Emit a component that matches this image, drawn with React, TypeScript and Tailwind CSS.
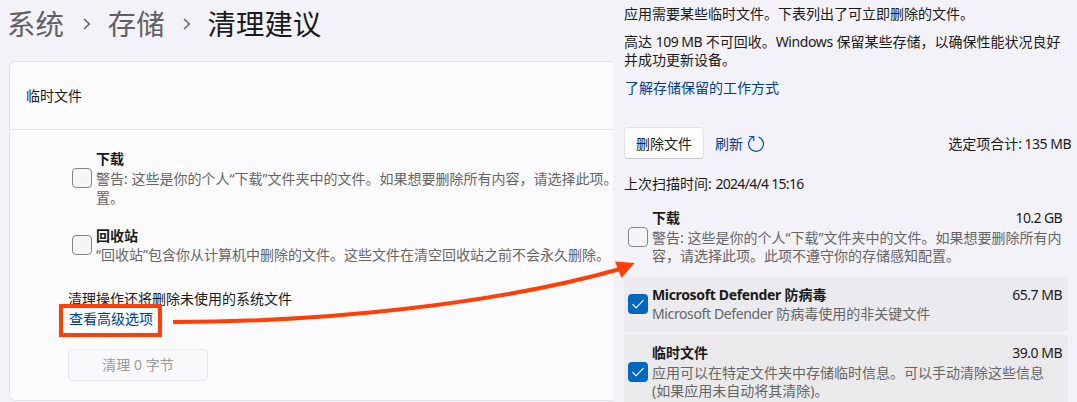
import type { ReactNode } from "react";

function Line({ children, className = "" }: { children: ReactNode; className?: string }) {
  return <div className={`h-[19px] whitespace-nowrap text-sm leading-[19px] ${className}`}>{children}</div>;
}

function Check({ checked = false }: { checked?: boolean }) {
  if (checked) {
    return (
      <span className="flex h-5 w-5 shrink-0 items-center justify-center rounded bg-[#0067c0]">
        <svg width="14" height="12" viewBox="0 0 14 12" fill="none" stroke="#fff" strokeWidth="1.2">
          <path d="M1.5 6.2 5 9.8 12.5 2.2" />
        </svg>
      </span>
    );
  }
  return <span className="h-5 w-5 shrink-0 rounded border border-[#858588] bg-[#f5f5f7]" />;
}

function Chevron() {
  return (
    <svg className="shrink-0" width="8" height="12" viewBox="0 0 8 12" fill="none" stroke="#606063" strokeWidth="1.5">
      <path d="M1 1 6.3 6 1 11" />
    </svg>
  );
}

function StorageCard() {
  return (
    <div className="ml-[9px] h-[340px] w-[604px] rounded-l-md border border-r-0 border-[#e3e2e9] bg-[#fbfbfd]">
      <div className="flex h-[68px] items-center border-b border-[#e3e2e9] pl-4">
        <Line className="text-[#1a1a1a]">临时文件</Line>
      </div>
      <div className="flex items-start pl-[62px] pt-[19px]">
        <div className="flex pt-[19px]"><Check /></div>
        <div className="ml-1">
          <Line className="font-bold text-[#1a1a1a]">下载</Line>
          <Line className="mt-px text-[#656567]">警告: 这些是你的个人“下载”文件夹中的文件。如果想要删除所有内容，请选择此项。</Line>
          <Line className="text-[#656567]">置。</Line>
        </div>
      </div>
      <div className="flex items-start pl-[62px] pt-[19px]">
        <div className="flex pt-[9px]"><Check /></div>
        <div className="ml-1">
          <Line className="font-bold text-[#1a1a1a]">回收站</Line>
          <Line className="text-[#656567]">“回收站”包含你从计算机中删除的文件。这些文件在清空回收站之前不会永久删除。</Line>
        </div>
      </div>
      <div className="ml-[58px] pt-[25px]">
        <Line className="text-[#1a1a1a]">清理操作还将删除未使用的系统文件</Line>
        <Line className="mt-px pl-px text-[#003e92]">查看高级选项</Line>
        <button className="mt-[21px] flex h-8 w-[140px] items-center justify-center rounded border border-[#e7e6eb] bg-[#f9f9fb] pb-0.5 text-[#9b9b9d]">
          <Line>清理 0 字节</Line>
        </button>
      </div>
    </div>
  );
}

export default function App() {
  return (
    <div className="relative flex h-[402px] w-[1077px] overflow-hidden bg-[#f3f2f8] font-['Noto_Sans','Noto_Sans_CJK_SC',sans-serif]">
      <section className="w-[613px] shrink-0">
        <h1 className="flex h-[61px] items-center whitespace-nowrap pb-[13px] pl-[7px] text-[28.4px] leading-9 text-[#606063]">
          <span>系统</span>
          <span className="ml-[19px] mr-[17px] flex"><Chevron /></span>
          <span>存储</span>
          <span className="ml-[18px] mr-[17px] flex"><Chevron /></span>
          <span className="text-[#1a1a1a]">清理建议</span>
        </h1>
        <StorageCard />
      </section>

      <section className="w-[464px] pl-[11px] pt-1 text-[#1a1a1a]">
        <Line>应用需要某些临时文件。下表列出了可立即删除的文件。</Line>
        <Line className="mt-[9px]">
          高达 <span className="tracking-[-0.5px]">109 MB</span> 不可回收。
          <span className="tracking-[-0.4px]">Windows</span> 保留某些存储，以确保性能状况良好
        </Line>
        <Line className="-mt-px">并成功更新设备。</Line>
        <Line className="mt-[9px] pl-px text-[#003e92]">了解存储保留的工作方式</Line>

        <div className="mt-[30px] flex h-8 items-center">
          <button className="flex h-8 w-20 items-center justify-center rounded border border-[#e3e2e8] border-b-[#c9c8cf] bg-[#fdfdfe]">
            <Line>删除文件</Line>
          </button>
          <Line className="ml-[11px] text-[#003e92]">刷新</Line>
          <svg className="ml-[4px] mt-[2px]" width="18" height="18" viewBox="0 0 18 18" fill="none" stroke="#0a4da0" strokeWidth="1.2">
            <path d="M11.5 2A7.4 7.4 0 1 1 6 2.2" />
            <path d="M2.200 1.500h4.600v4.400" />
          </svg>
          <Line className="ml-auto mr-[6px]">选定项合计<span className="tracking-[-0.5px]">: 135 MB</span></Line>
        </div>
        <Line className="mt-[15px]">上次扫描时间: <span className="tracking-[-0.7px]">2024/4/4 15:16</span></Line>

        <div className="mt-[14px] flex h-[70px] w-[444px] pl-1">
          <div className="flex pt-[20px]"><Check /></div>
          <div className="ml-1 flex-1 pt-px">
            <div className="flex justify-between pr-[6px]">
              <Line className="font-bold">下载</Line>
              <Line className="tracking-[-0.6px]">10.2 GB</Line>
            </div>
            <Line className="mt-px text-[#656567]">警告: 这些是你的个人“下载”文件夹中的文件。如果想要删除所有内</Line>
            <Line className="-mt-px text-[#656567]">容，请选择此项。此项不遵守你的存储感知配置。</Line>
          </div>
        </div>
        <div className="flex h-[54px] w-[444px] rounded-r bg-[#ebeaee] pl-1">
          <div className="flex pt-[17px]"><Check checked /></div>
          <div className="ml-1 flex-1 pt-2">
            <div className="flex justify-between pr-[6px]">
              <Line className="font-bold"><span className="tracking-[-0.35px]">Microsoft Defender</span> 防病毒</Line>
              <Line className="tracking-[-0.5px]">65.7 MB</Line>
            </div>
            <Line className="text-[#656567]"><span className="tracking-[-0.38px]">Microsoft Defender</span> 防病毒使用的非关键文件</Line>
          </div>
        </div>
        <div className="mt-1 flex h-[68px] w-[444px] rounded-tr bg-[#eaeaec] pl-1">
          <div className="flex pt-[27px]"><Check checked /></div>
          <div className="ml-1 flex-1 pt-2">
            <div className="flex justify-between pr-[6px]">
              <Line className="font-bold">临时文件</Line>
              <Line className="tracking-[-0.5px]">39.0 MB</Line>
            </div>
            <Line className="mt-px text-[#656567]">应用可以在特定文件夹中存储临时信息。可以手动清除这些信息</Line>
            <Line className="-mt-px text-[#656567]">(如果应用未自动将其清除)。</Line>
          </div>
        </div>
      </section>

      <div className="pointer-events-none absolute left-[59px] top-[304px] h-[33px] w-[103px] border-4 border-[#ff3f05]" />
      <svg className="pointer-events-none absolute left-0 top-0" width="1077" height="402" fill="none">
        <path d="M173 322C330 322 500 303 620 269" stroke="#ff3f05" strokeWidth="4" />
        <path d="M615 261.5 634.5 263 621.5 278Z" fill="#ff3f05" />
      </svg>
    </div>
  );
}
